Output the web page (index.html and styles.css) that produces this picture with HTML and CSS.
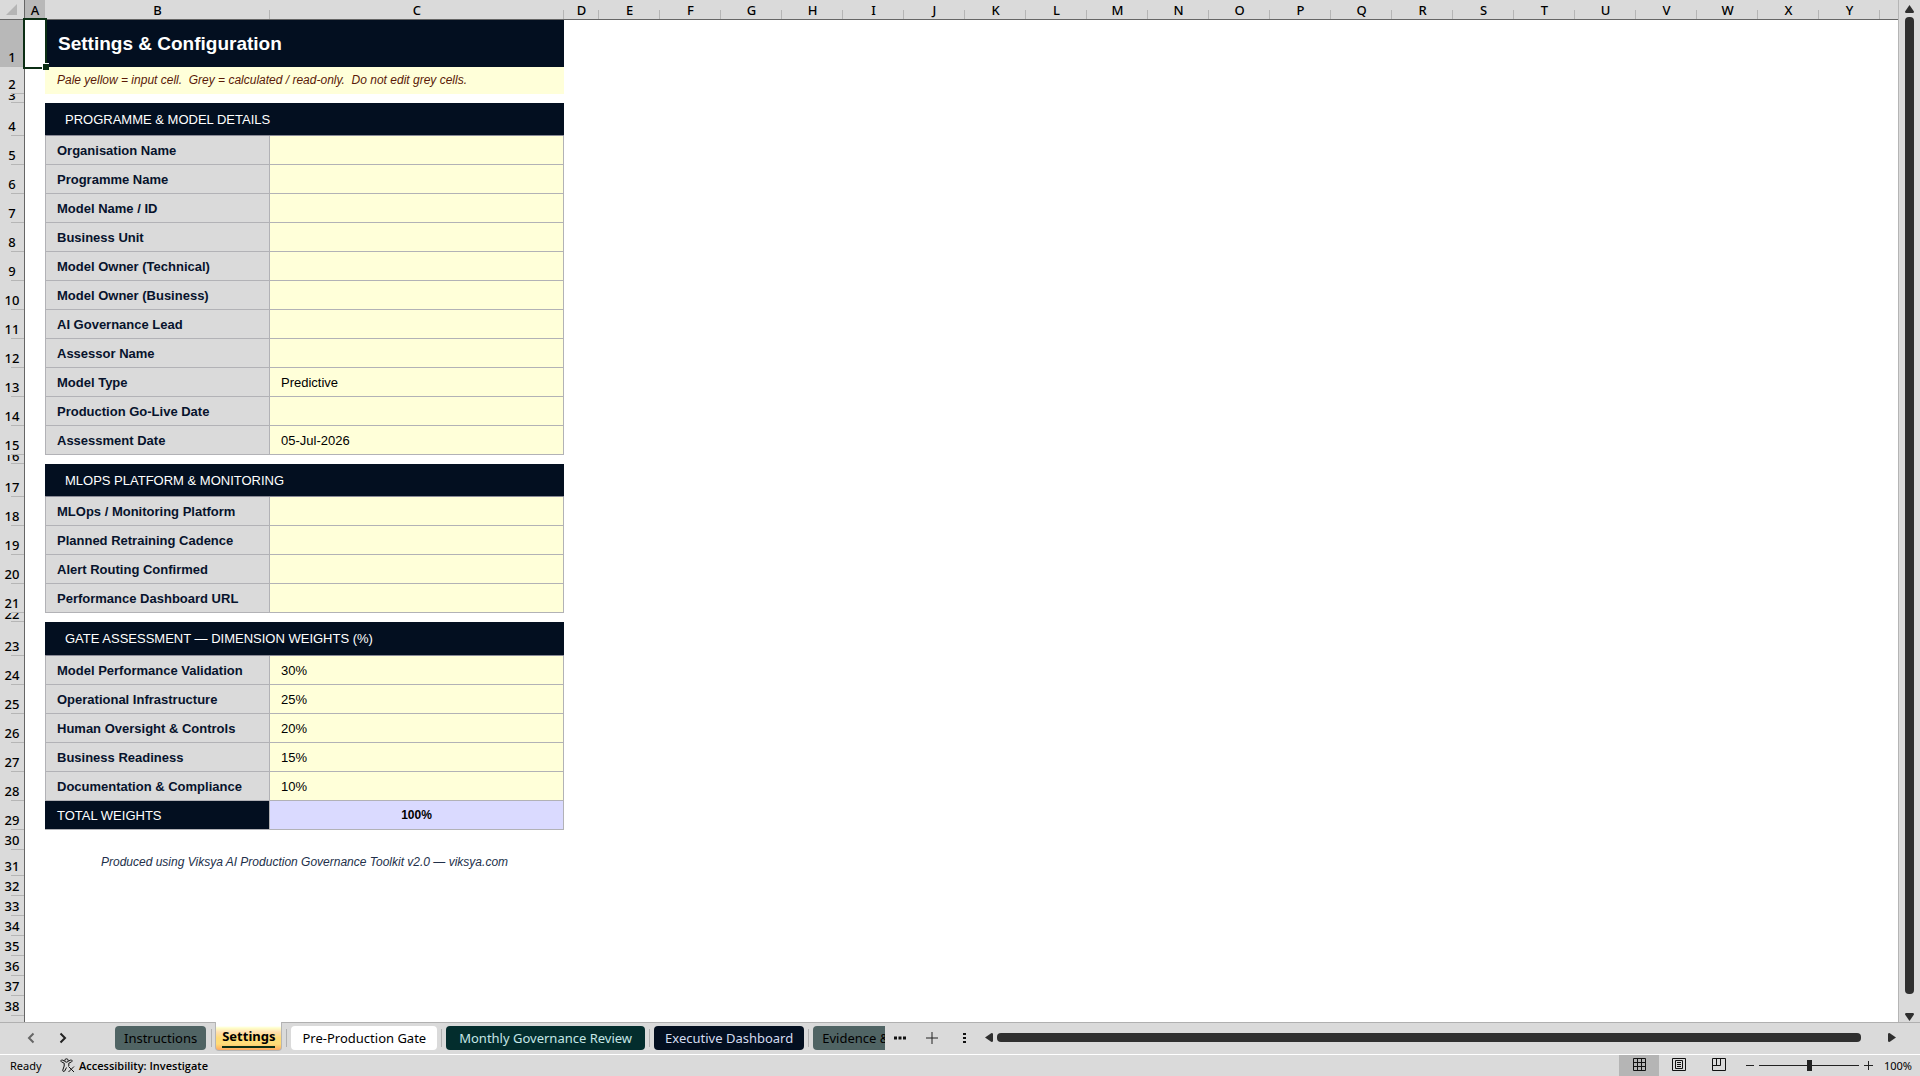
FILE: index.html
```html
<!doctype html>
<html lang="en">
	<head>
		<meta charset="UTF-8" />
		<meta name="viewport" content="width=device-width, initial-scale=1.0" />
		<title>Settings &amp; Configuration</title>
		<link rel="stylesheet" href="styles.css">
	</head>
	<body>
		<main class="workspace">
			<div class="sheet">
				<table class="grid">
					<colgroup>
						<col class="col-rownum">
						<col class="col-a">
						<col class="col-b">
						<col class="col-c">
						<col class="col-d">
						<col class="col-std" span="21">
						<col>
					</colgroup>
					<thead>
						<tr>
							<th class="corner"><svg width="12" height="12" viewBox="0 0 12 12"><path d="M11 0v11H0z" fill="#b5b5b5"/></svg></th>
							<th class="selected">A</th><th>B</th><th>C</th><th>D</th><th>E</th><th>F</th><th>G</th><th>H</th><th>I</th><th>J</th><th>K</th><th>L</th><th>M</th><th>N</th><th>O</th><th>P</th><th>Q</th><th>R</th><th>S</th><th>T</th><th>U</th><th>V</th><th>W</th><th>X</th><th>Y</th><th class="rest"></th>
						</tr>
					</thead>
					<tbody>
						<tr class="row-title"><th class="selected">1</th><td class="active-cell"><div class="selection"></div></td><td class="title" colspan="2">Settings &amp; Configuration</td></tr>
						<tr class="row-note"><th>2</th><td></td><td class="note" colspan="2">Pale yellow = input cell.&nbsp; Grey = calculated / read-only.&nbsp; Do not edit grey cells.</td></tr>
						<tr class="row-gap"><th><div>3</div></th><td></td></tr>

						<tr class="row-section"><th>4</th><td></td><td class="section" colspan="2">PROGRAMME &amp; MODEL DETAILS</td></tr>
						<tr class="row-field"><th>5</th><td></td><td class="name"><label for="organisation">Organisation Name</label></td><td class="value"><input type="text" id="organisation"></td></tr>
						<tr class="row-field"><th>6</th><td></td><td class="name"><label for="programme">Programme Name</label></td><td class="value"><input type="text" id="programme"></td></tr>
						<tr class="row-field"><th>7</th><td></td><td class="name"><label for="model">Model Name / ID</label></td><td class="value"><input type="text" id="model"></td></tr>
						<tr class="row-field"><th>8</th><td></td><td class="name"><label for="unit">Business Unit</label></td><td class="value"><input type="text" id="unit"></td></tr>
						<tr class="row-field"><th>9</th><td></td><td class="name"><label for="owner-tech">Model Owner (Technical)</label></td><td class="value"><input type="text" id="owner-tech"></td></tr>
						<tr class="row-field"><th>10</th><td></td><td class="name"><label for="owner-biz">Model Owner (Business)</label></td><td class="value"><input type="text" id="owner-biz"></td></tr>
						<tr class="row-field"><th>11</th><td></td><td class="name"><label for="lead">AI Governance Lead</label></td><td class="value"><input type="text" id="lead"></td></tr>
						<tr class="row-field"><th>12</th><td></td><td class="name"><label for="assessor">Assessor Name</label></td><td class="value"><input type="text" id="assessor"></td></tr>
						<tr class="row-field"><th>13</th><td></td><td class="name"><label for="type">Model Type</label></td><td class="value"><input type="text" id="type" value="Predictive"></td></tr>
						<tr class="row-field"><th>14</th><td></td><td class="name"><label for="go-live">Production Go-Live Date</label></td><td class="value"><input type="text" id="go-live"></td></tr>
						<tr class="row-field"><th>15</th><td></td><td class="name"><label for="assessed">Assessment Date</label></td><td class="value"><input type="text" id="assessed" value="05-Jul-2026"></td></tr>
						<tr class="row-gap"><th><div>16</div></th><td></td></tr>

						<tr class="row-section"><th>17</th><td></td><td class="section" colspan="2">MLOPS PLATFORM &amp; MONITORING</td></tr>
						<tr class="row-field"><th>18</th><td></td><td class="name"><label for="platform">MLOps / Monitoring Platform</label></td><td class="value"><input type="text" id="platform"></td></tr>
						<tr class="row-field"><th>19</th><td></td><td class="name"><label for="cadence">Planned Retraining Cadence</label></td><td class="value"><input type="text" id="cadence"></td></tr>
						<tr class="row-field"><th>20</th><td></td><td class="name"><label for="alerts">Alert Routing Confirmed</label></td><td class="value"><input type="text" id="alerts"></td></tr>
						<tr class="row-field"><th>21</th><td></td><td class="name"><label for="dashboard">Performance Dashboard URL</label></td><td class="value"><input type="text" id="dashboard"></td></tr>
						<tr class="row-gap"><th><div>22</div></th><td></td></tr>

						<tr class="row-section tall"><th>23</th><td></td><td class="section" colspan="2">GATE ASSESSMENT — DIMENSION WEIGHTS (%)</td></tr>
						<tr class="row-field"><th>24</th><td></td><td class="name"><label for="w-model">Model Performance Validation</label></td><td class="value"><input type="text" id="w-model" value="30%"></td></tr>
						<tr class="row-field"><th>25</th><td></td><td class="name"><label for="w-infra">Operational Infrastructure</label></td><td class="value"><input type="text" id="w-infra" value="25%"></td></tr>
						<tr class="row-field"><th>26</th><td></td><td class="name"><label for="w-human">Human Oversight &amp; Controls</label></td><td class="value"><input type="text" id="w-human" value="20%"></td></tr>
						<tr class="row-field"><th>27</th><td></td><td class="name"><label for="w-business">Business Readiness</label></td><td class="value"><input type="text" id="w-business" value="15%"></td></tr>
						<tr class="row-field"><th>28</th><td></td><td class="name"><label for="w-docs">Documentation &amp; Compliance</label></td><td class="value"><input type="text" id="w-docs" value="10%"></td></tr>
						<tr class="row-field"><th>29</th><td></td><td class="total-name">TOTAL WEIGHTS</td><td class="total-value">100%</td></tr>

						<tr><th>30</th><td></td></tr>
						<tr class="row-credit"><th>31</th><td></td><td class="credit" colspan="2">Produced using Viksya AI Production Governance Toolkit v2.0 — viksya.com</td></tr>
						<tr><th>32</th><td></td></tr>
						<tr><th>33</th><td></td></tr>
						<tr><th>34</th><td></td></tr>
						<tr><th>35</th><td></td></tr>
						<tr><th>36</th><td></td></tr>
						<tr><th>37</th><td></td></tr>
						<tr><th>38</th><td></td></tr>
						<tr><th></th><td></td></tr>
					</tbody>
				</table>
			</div>
			<div class="vscroll">
				<button type="button" class="arrow" aria-label="Scroll up"><svg width="9" height="8" viewBox="0 0 9 8"><path d="M4.5 0 9 6.500 8.500 8h-8L0 6.500z"/></svg></button>
				<div class="vthumb"></div>
				<button type="button" class="arrow" aria-label="Scroll down"><svg width="9" height="8" viewBox="0 0 9 8"><path d="M4.500 8 0 1.500.500 0h8l.5 1.500z"/></svg></button>
			</div>
		</main>

		<nav class="tabbar">
			<div class="tab-nav">
				<button type="button" class="icon dim" aria-label="Previous sheet"><svg width="8" height="12" viewBox="0 0 8 12"><path d="M6.500 1.500 2 6l4.500 4.500"/></svg></button>
				<button type="button" class="icon" aria-label="Next sheet"><svg width="8" height="12" viewBox="0 0 8 12"><path d="M1.500 1.500 6 6l-4.500 4.500"/></svg></button>
			</div>
			<div class="tabs">
				<button type="button" class="tab slate">Instructions</button>
				<button type="button" class="tab current"><span>Settings</span></button>
				<button type="button" class="tab white">Pre-Production Gate</button>
				<button type="button" class="tab green">Monthly Governance Review</button>
				<button type="button" class="tab navy">Executive Dashboard</button>
				<button type="button" class="tab slate">Evidence &amp;</button>
			</div>
			<div class="tab-tools">
				<button type="button" class="icon" aria-label="More sheets"><svg width="12" height="4" viewBox="0 0 12 4"><path d="M0 .5h3v3H0zM4.500.500h3v3h-3zM9 .5h3v3H9z" fill="#111" stroke="none"/></svg></button>
				<button type="button" class="icon" aria-label="New sheet"><svg width="12" height="12" viewBox="0 0 12 12"><path d="M6 0v12M0 6h12"/></svg></button>
				<button type="button" class="icon grip" aria-label="Resize tabs"><svg width="3" height="12" viewBox="0 0 3 12"><path d="M0 1h3v2H0zM0 5h3v2H0zM0 9h3v2H0z" fill="#111" stroke="none"/></svg></button>
			</div>
			<div class="hscroll">
				<button type="button" class="arrow" aria-label="Scroll left"><svg width="8" height="9" viewBox="0 0 8 9"><path d="M0 4.500 6.500 0 8 .5v8L6.500 9z"/></svg></button>
				<div class="hthumb"></div>
				<button type="button" class="arrow" aria-label="Scroll right"><svg width="8" height="9" viewBox="0 0 8 9"><path d="M8 4.500 1.500 0 0 .5v8L1.500 9z"/></svg></button>
			</div>
		</nav>

		<footer class="status">
			<span class="ready">Ready</span>
			<button type="button" class="access">
				<svg width="15" height="15" viewBox="0 0 15 15"><circle cx="6.500" cy="2.500" r="1.700"/><path d="M4.800 3.200 2.200 2C1 1.600.300 3.300 1.500 3.900L4.200 5.200V8L2.800 12c-.4 1.500 1.200 2.200 1.900 1L6.500 9.500M8.200 3.200 10.800 2c1.200-.4 1.900 1.300.7 1.900L8.800 5.200V8M8.500 8.500l5.500 5.500M14 8.500 8.500 14"/></svg>
				Accessibility: Investigate
			</button>
			<div class="views">
				<button type="button" class="view on" aria-label="Normal"><svg width="13" height="13" viewBox="0 0 13 13"><path d="M.5.500h12v12H.5zM4.500.500v12M8.500.500v12M.5 4.500h12M.5 8.500h12"/></svg></button>
				<button type="button" class="view" aria-label="Page layout"><svg width="14" height="13" viewBox="0 0 14 13"><path d="M.5.500h13v12H.500zM3.500 2.500h7v8h-7zM5 4.500h4M5 6.500h4M5 8.500h4"/></svg></button>
				<button type="button" class="view" aria-label="Page break preview"><svg width="14" height="13" viewBox="0 0 14 13"><path d="M.5.500h13v12H.500zM.5 7.500h8v-7M4.500.500v7"/></svg></button>
			</div>
			<div class="zoom">
				<button type="button" class="icon" aria-label="Zoom out"><svg width="8" height="9" viewBox="0 0 8 9"><path d="M0 4.500h8"/></svg></button>
				<input type="range" min="0" max="100" value="50" aria-label="Zoom">
				<button type="button" class="icon" aria-label="Zoom in"><svg width="9" height="9" viewBox="0 0 9 9"><path d="M0 4.500h9M4.500 0v9"/></svg></button>
			</div>
			<span class="percent">100%</span>
		</footer>
	</body>
</html>
```

FILE: styles.css
```css
* {
	box-sizing: border-box;
}
body {
	margin: 0;
	height: 100vh;
	display: flex;
	flex-direction: column;
	overflow: hidden;
	background: #dadada;
	color: #000;
	font-family: "Noto Sans", "Open Sans", sans-serif;
	font-size: 13px;
}
button {
	margin: 0;
	padding: 0;
	border: none;
	background: none;
	color: inherit;
	font: inherit;
	cursor: pointer;
}
svg {
	display: block;
}

/* sheet */
.workspace {
	flex: 1;
	min-height: 0;
	display: flex;
}
.sheet {
	flex: 1;
	min-width: 0;
	overflow: hidden;
	background: #fff;
	border-right: 1px solid #b5b5b5;
}
.grid {
	width: 100%;
	table-layout: fixed;
	border-collapse: separate;
	border-spacing: 0;
	font-family: "Liberation Sans", Arial, sans-serif;
}
.col-rownum {
	width: 25px;
}
.col-a {
	width: 20px;
}
.col-b {
	width: 225px;
}
.col-c {
	width: 294px;
}
.col-d {
	width: 35px;
}
.col-std {
	width: 61px;
}
.grid th, .grid td {
	padding: 0;
}
.grid th {
	background: #dadada;
	font-family: "Noto Sans", sans-serif;
	font-size: 13px;
	font-weight: 500;
	line-height: 16px;
}
.grid thead th {
	height: 20px;
	border-bottom: 1px solid #666;
	background: linear-gradient(#b5b5b5, #b5b5b5) right bottom / 1px 9px no-repeat #dadada;
}
.grid thead .corner {
	background: #dadada;
	border-right: 1px solid #666;
}
.corner svg {
	margin: 0 auto;
}
.grid thead .rest {
	background: #dadada;
}
.grid thead .selected, .grid tbody .selected {
	background-color: #b8b8b8;
}
.grid tbody tr {
	height: 20px;
}
.grid tbody th {
	vertical-align: bottom;
	padding-bottom: 2px;
	border-right: 1px solid #666;
	background: linear-gradient(#b5b5b5, #b5b5b5) right bottom / 13px 1px no-repeat #dadada;
}
.grid .row-title {
	height: 47px;
}
.grid .row-note {
	height: 27px;
}
.grid .row-credit {
	height: 26px;
}
.grid .row-gap {
	height: 9px;
}
.grid .row-gap th {
	padding-bottom: 0;
}
.grid .row-section {
	height: 33px;
}
.grid .row-section.tall {
	height: 34px;
}
.grid .row-field {
	height: 29px;
}
.row-gap div {
	height: 9px;
	line-height: 3px;
	overflow: hidden;
}
.active-cell {
	position: relative;
}
.selection {
	position: absolute;
	inset: -2px;
	border: 2px solid #0b2e14;
}
.selection::after {
	content: "";
	position: absolute;
	right: -4px;
	bottom: -3px;
	width: 6px;
	height: 6px;
	background: #0b2e14;
	border: 1px solid #fff;
	border-width: 1px 0 0 1px;
}
.grid .title {
	padding-left: 13px;
	background: #030f20;
	color: #fff;
	font-size: 19px;
	font-weight: bold;
}
.grid .note {
	padding: 0 0 2px 12px;
	background: #ffffd9;
	color: #5a1a08;
	font-size: 12px;
	font-style: italic;
}
.grid .section {
	padding-left: 20px;
	background: #030f20;
	border-bottom: 1px solid #8a8a96;
	color: #fff;
}
.grid .name {
	padding-left: 11px;
	background: #dadada;
	border: 1px solid #b2b2b6;
	border-width: 0 1px 1px 1px;
	color: #07132c;
	font-weight: bold;
}
.grid .value {
	border: 1px solid #b2b2b6;
	border-width: 0 1px 1px 0;
}
.value input {
	display: block;
	width: 100%;
	height: 28px;
	padding: 0 11px;
	border: none;
	outline: none;
	background: #ffffd9;
	color: #000;
	font: 13px "Liberation Sans", Arial, sans-serif;
}
.grid .total-name {
	padding-left: 12px;
	background: #030f20;
	border: 1px solid #b2b2b6;
	border-width: 0 1px 1px 0;
	color: #fff;
}
.grid .total-value {
	background: #dadaff;
	border: 1px solid #b2b2b6;
	border-width: 0 1px 1px 0;
	font-size: 12px;
	font-weight: bold;
	text-align: center;
}
.grid .credit {
	padding-bottom: 2px;
	color: #22304a;
	font-size: 12px;
	font-style: italic;
	text-align: center;
}

/* scrollbars */
.arrow {
	flex: none;
	fill: #2f2f2f;
}
.vscroll {
	width: 21px;
	padding: 5px 0 1px 6px;
	display: flex;
	flex-direction: column;
	align-items: flex-start;
}
.vthumb {
	flex: 1;
	width: 9px;
	margin: 4px 0 19px;
	border-radius: 4px;
	background: #2f2f2f;
}
.hscroll {
	flex: 1;
	display: flex;
	align-items: center;
	padding: 0 24px 2px 19px;
}
.hthumb {
	flex: 1;
	height: 9px;
	margin: 0 27px 0 4px;
	border-radius: 4px;
	background: #2f2f2f;
}

/* sheet tabs */
.tabbar {
	height: 32px;
	display: flex;
	border-top: 1px solid #b0b0b0;
}
.icon {
	fill: none;
	stroke: #222;
}
.tab-nav {
	width: 115px;
	display: flex;
	align-items: center;
	gap: 24px;
	padding-left: 27px;
	padding-bottom: 2px;
}
.tab-nav .icon {
	stroke-width: 2;
}
.tab-nav .dim {
	stroke: #666;
}
.tabs {
	width: 770px;
	display: flex;
	overflow: hidden;
	gap: 9px;
	margin-top: -1px;
}
.tab {
	position: relative;
	flex: none;
	height: 24px;
	margin-top: 4px;
	padding: 0 11px;
	border-radius: 4px;
	line-height: 24px;
	white-space: nowrap;
}
.tab + .tab::before {
	content: "";
	position: absolute;
	left: -5px;
	top: 3px;
	width: 1px;
	height: 18px;
	background: #b0b0b0;
}
.tab.slate {
	padding: 0 9px;
	background: #506464;
}
.tab.white {
	background: #fff;
}
.tab.green {
	padding: 0 13px;
	background: #032d2d;
	color: #c5e6e6;
}
.tab.navy {
	background: #030f20;
	color: #d5dcf0;
}
.tab.current {
	height: 29px;
	margin-top: 0;
	padding: 2px 6px 0;
	border: 1px solid #b5b5b5;
	border-top: none;
	border-radius: 0 0 4px 4px;
	background: linear-gradient(#fff 0, #fff 4px, #ffffc8 6px, #ffdfb0 10px, #ffdc78 16px, #ffdc78 22px, #ffaa60 100%);
	font-weight: bold;
	line-height: 19px;
}
.tab.current::before {
	top: 7px;
}
.current span {
	display: block;
	border-bottom: 2px solid #0b2e14;
}
.tab-tools {
	display: flex;
	align-items: center;
	gap: 20px;
	padding: 0 0 2px 9px;
}
.tab-tools .grip {
	margin-left: 5px;
}

/* status bar */
.status {
	height: 22px;
	display: flex;
	align-items: center;
	border-top: 1px solid #fff;
	font-size: 11px;
}
.ready {
	width: 60px;
	padding-left: 10px;
}
.access {
	display: flex;
	align-items: center;
	gap: 4px;
	font-family: "Open Sans", sans-serif;
	font-weight: 600;
	fill: none;
	stroke: #111;
}
.views {
	display: flex;
	align-self: stretch;
	margin-left: auto;
}
.view {
	width: 40px;
	display: flex;
	align-items: center;
	justify-content: center;
	padding-bottom: 2px;
	fill: none;
	stroke: #111;
}
.view.on {
	background: #b5b5b5;
}
.zoom {
	display: flex;
	align-items: center;
	gap: 5px;
	margin-left: 7px;
}
.zoom input {
	width: 100px;
	height: 12px;
	margin: 0;
	appearance: none;
	background: linear-gradient(#222, #222) center / 100% 1px no-repeat;
}
.zoom input::-webkit-slider-thumb {
	appearance: none;
	width: 5px;
	height: 11px;
	background: #222;
}
.percent {
	width: 47px;
	padding-right: 8px;
	text-align: right;
}
```
